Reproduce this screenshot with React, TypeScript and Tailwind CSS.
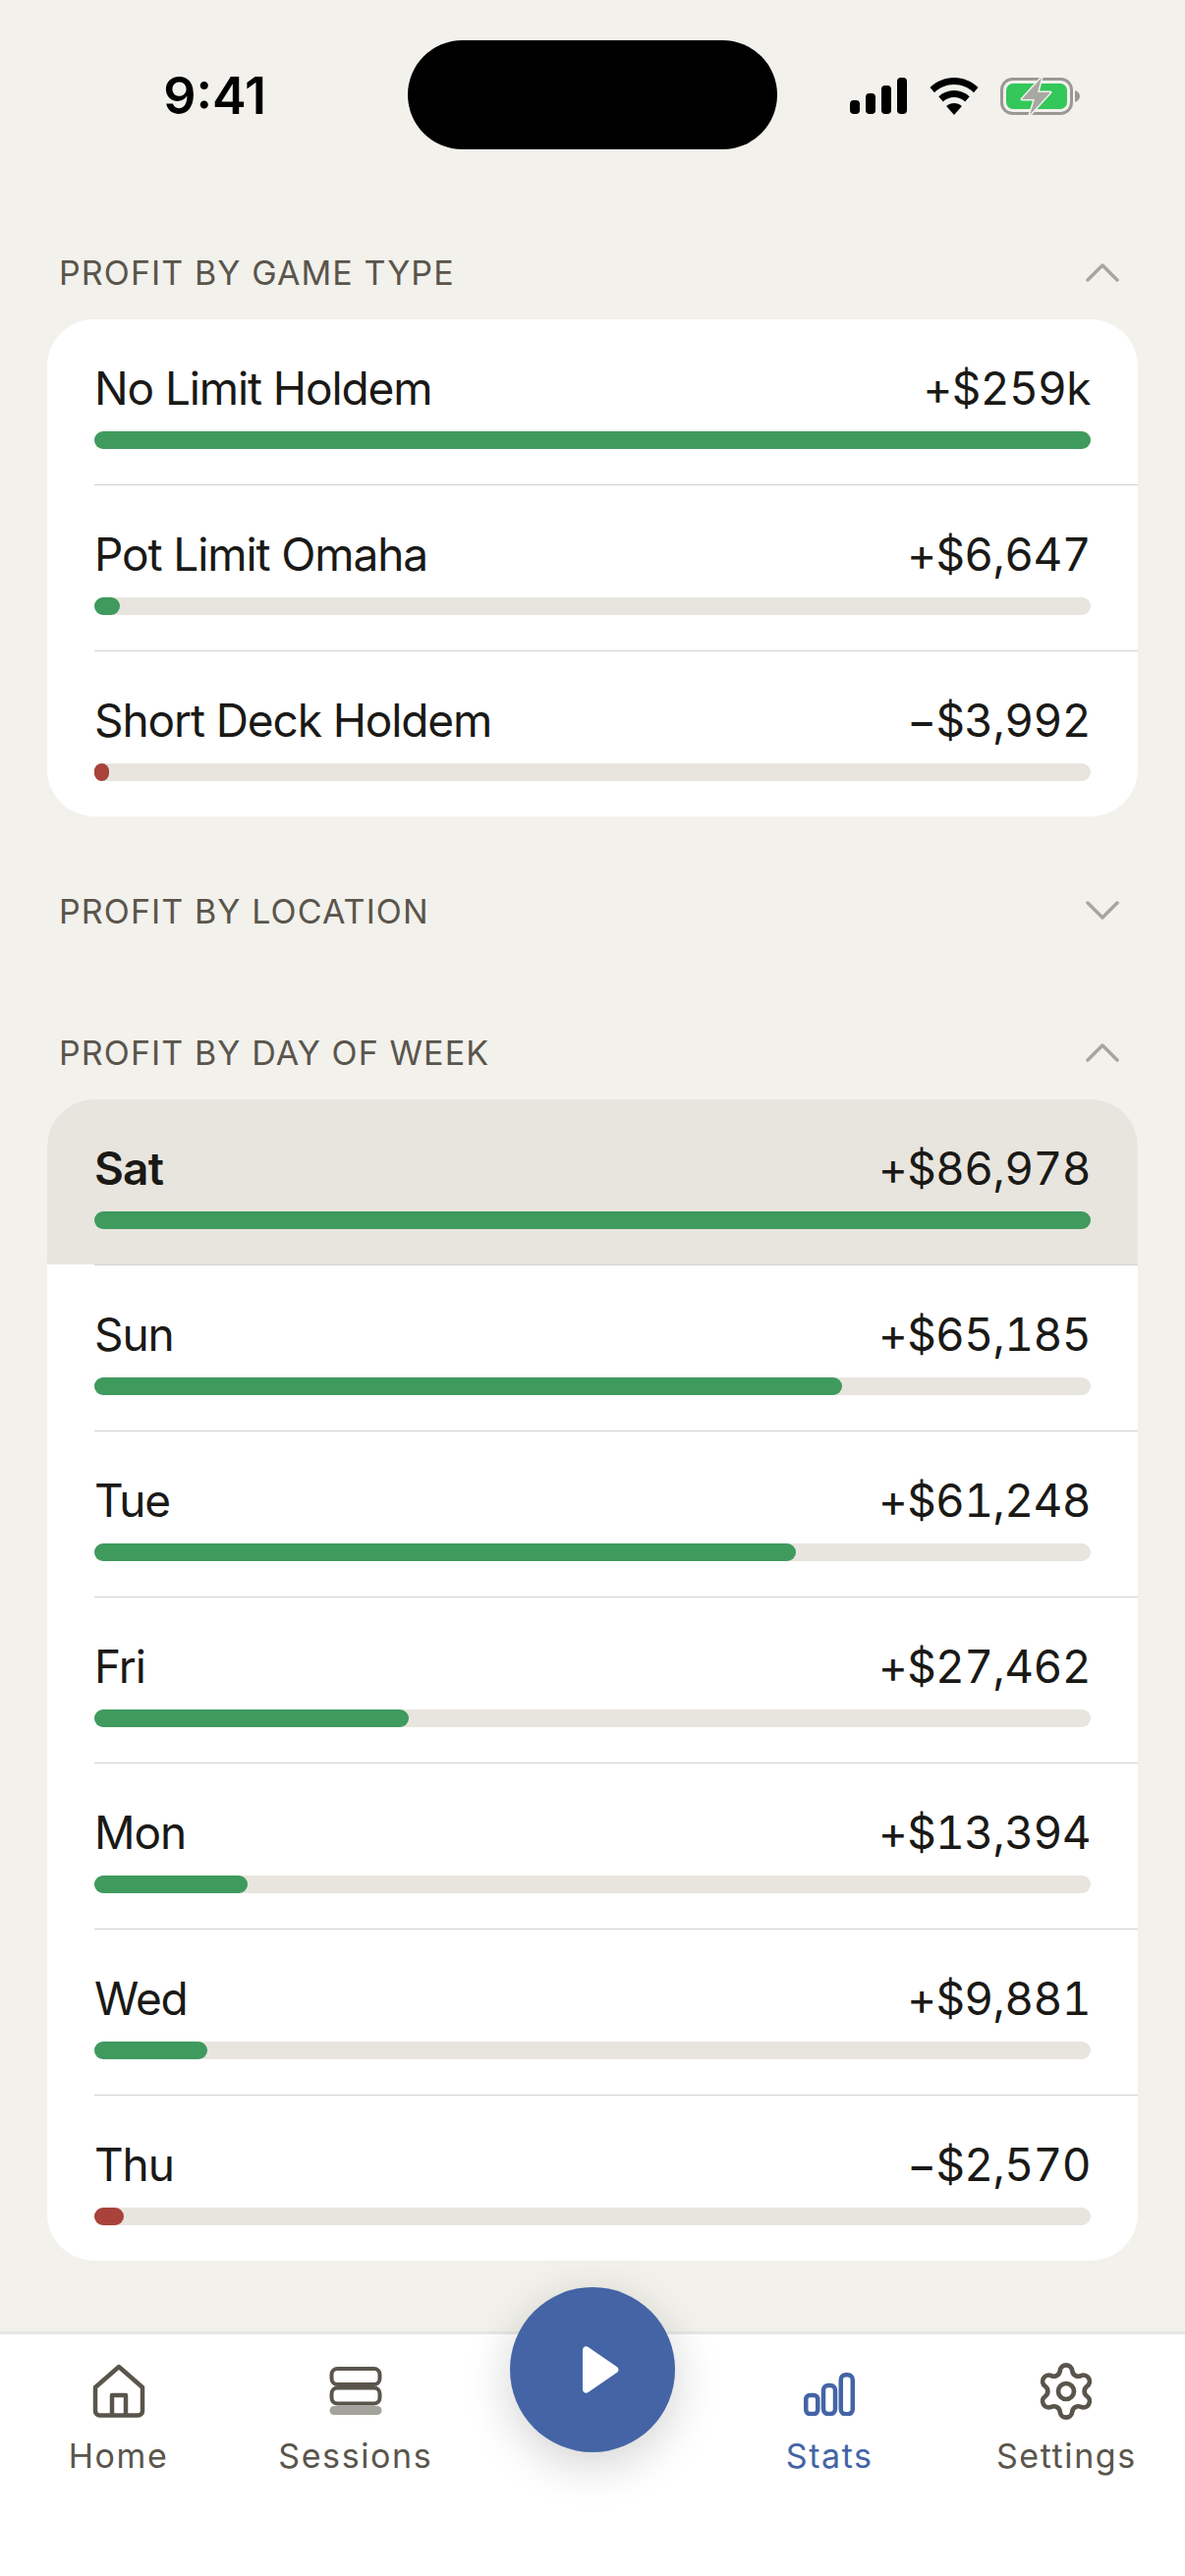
import { Settings } from 'lucide-react';

type Row = { label: string; value: string; pct: number; loss?: boolean; active?: boolean };

const gameRows: Row[] = [
  { label: 'No Limit Holdem', value: '+$259k', pct: 100 },
  { label: 'Pot Limit Omaha', value: '+$6,647', pct: 2.6 },
  { label: 'Short Deck Holdem', value: '−$3,992', pct: 1.5, loss: true }
];

const dayRows: Row[] = [
  { label: 'Sat', value: '+$86,978', pct: 100, active: true },
  { label: 'Sun', value: '+$65,185', pct: 75 },
  { label: 'Tue', value: '+$61,248', pct: 70.4 },
  { label: 'Fri', value: '+$27,462', pct: 31.6 },
  { label: 'Mon', value: '+$13,394', pct: 15.4 },
  { label: 'Wed', value: '+$9,881', pct: 11.3 },
  { label: 'Thu', value: '−$2,570', pct: 3, loss: true }
];

const Chevron = ({ up }: { up?: boolean }) => (
  <svg width="34" height="20" viewBox="0 0 34 20" fill="none" stroke="#a8a69c" strokeWidth="3.5" strokeLinecap="round" strokeLinejoin="round">
    <path d={up ? 'M2 18 17 3l15 15' : 'M2 2l15 15L32 2'} />
  </svg>
);

const SectionHeader = ({ title, up }: { title: string; up?: boolean }) => (
  <div className="flex h-24 items-center justify-between pl-[12px] pr-[19px]">
    <span className="text-[34px] tracking-[1.1px] text-[#5a554c]">{title}</span>
    <Chevron up={up} />
  </div>
);

const StatRow = ({ row }: { row: Row }) => (
  <div className={`h-[168px] px-12 pt-10 ${row.active ? 'bg-[#e8e5de]' : ''}`}>
    <div className="mb-[14px] flex h-[60px] items-center justify-between text-[46px] leading-[60px] text-[#1a1916]">
      <span className={row.active ? 'font-semibold tracking-[-0.8px]' : 'tracking-[-1.1px]'}>{row.label}</span>
      <span className="tabular-nums tracking-[-0.6px]">{row.value}</span>
    </div>
    <div className="h-[18px] rounded-full bg-[#e8e5de]">
      <div
        className={`h-full rounded-full ${row.loss ? 'bg-[#a8423a]' : 'bg-[#3f9a5e]'}`}
        style={{ width: `${row.pct}%` }}
      />
    </div>
  </div>
);

const StatCard = ({ rows }: { rows: Row[] }) => (
  <div className="overflow-hidden rounded-[48px] bg-white">
    {rows.map((row, i) => (
      <div key={row.label}>
        {i > 0 && <div className="ml-12 h-px bg-[#d2d2cf]" />}
        <StatRow row={row} />
      </div>
    ))}
  </div>
);

const StatusBar = () => (
  <div className="flex h-[229px] items-start">
    <div className="flex h-[196px] w-[415px] items-center justify-end pr-[144px] text-[52px] font-semibold text-black">9:41</div>
    <div className="mt-[41px] h-[111px] w-[376px] rounded-[56px] bg-black" />
    <div className="mt-[78px] flex items-center pl-[74px]">
      <svg width="58" height="38" viewBox="0 0 58 38" fill="black">
        <rect x="0" y="23" width="10" height="14" rx="4" />
        <rect x="16" y="16" width="10" height="21" rx="4" />
        <rect x="32" y="8" width="10" height="29" rx="4" />
        <rect x="48" y="0" width="10" height="37" rx="4" />
      </svg>
      <svg className="ml-[23px]" width="50" height="38" viewBox="0 0 50 38" fill="black">
        <path d="M25 0C15.6 0 7.2 3.7 0.5 10L5 15.2C10.5 10 17.4 7 25 7s14.5 3 20 8.2l4.5-5.2C42.8 3.7 34.4 0 25 0z" />
        <path d="M25 13c-6 0-11.4 2.3-15.7 6.2l4.5 5.2C16.8 21.7 20.7 20 25 20s8.2 1.7 11.2 4.4l4.5-5.2C36.4 15.3 31 13 25 13z" />
        <path d="M25 26c-3 0-5.7 1-7.9 2.9L25 38l7.9-9.1C30.7 27 28 26 25 26z" />
      </svg>
      <svg className="ml-[22px]" width="82" height="40" viewBox="0 0 82 40" fill="none">
        <rect x="1.5" y="2.5" width="71" height="35" rx="11" stroke="#999893" strokeWidth="3" />
        <rect x="6" y="7" width="62" height="26" rx="7" fill="#34c759" />
        <path d="M76 14c3 1 5 3 5 6s-2 5-5 6z" fill="#999893" />
        <path d="M42 1 22 23h13l-5 16 21-23H38z" fill="#a8a8a2" stroke="#f2f1ec" strokeWidth="3" strokeLinejoin="round" paintOrder="stroke" />
      </svg>
    </div>
  </div>
);

const HomeIcon = () => (
  <svg width="54" height="56" viewBox="0 0 54 56" fill="none" stroke="#5a554c" strokeWidth="4.5" strokeLinejoin="round">
    <path d="M27 3 51 24V48a4.5 4.5 0 0 1-4.5 4.5H7.5A4.5 4.5 0 0 1 3 48V24z" />
    <path d="M20 52.5V32h14v20.5" />
  </svg>
);

const SessionsIcon = () => (
  <svg width="54" height="50" viewBox="0 0 54 50" fill="none">
    <rect x="2.5" y="2" width="49" height="16" rx="6" stroke="#5a554c" strokeWidth="4" />
    <rect x="2.5" y="21.5" width="49" height="16" rx="6" stroke="#5a554c" strokeWidth="4" />
    <rect x="0.5" y="40" width="53" height="9" rx="4.5" fill="#a3a29b" />
  </svg>
);

const StatsIcon = () => (
  <svg className="mt-[5px]" width="52" height="44" viewBox="0 0 52 44" fill="none" stroke="#4464a5" strokeWidth="4.5" strokeLinejoin="round">
    <rect x="2.25" y="23" width="12" height="19" rx="4" />
    <rect x="20" y="13" width="12" height="29" rx="5" />
    <rect x="37.75" y="2.25" width="12" height="40" rx="5" />
  </svg>
);

const tabs = [
  { label: 'Home', icon: <HomeIcon /> },
  { label: 'Sessions', icon: <SessionsIcon /> },
  { label: 'Stats', icon: <StatsIcon />, active: true },
  { label: 'Settings', icon: <Settings size={64} color="#5a554c" strokeWidth={1.75} /> }
];

const TabItem = ({ label, icon, active }: { label: string; icon: React.ReactNode; active?: boolean }) => (
  <div className="flex flex-col items-center pt-[27px]">
    <div className="flex h-[62px] items-center justify-center">{icon}</div>
    <span className={`mt-[13px] text-[34px] leading-[44px] tracking-[1.6px] ${active ? 'text-[#4464a5]' : 'text-[#5a554c]'}`}>{label}</span>
  </div>
);

const TabBar = () => (
  <div className="relative grid h-[249px] grid-cols-5 border-t-[3px] border-[#e6e6e3] bg-white">
    <TabItem {...tabs[0]} />
    <TabItem {...tabs[1]} />
    <div className="relative">
      <div className="absolute -top-[48px] left-1/2 flex h-[168px] w-[168px] -translate-x-1/2 items-center justify-center rounded-full bg-[#4464a5] shadow-[0_12px_48px_rgba(0,0,0,0.18)]">
        <svg className="ml-[17px]" width="38" height="52" viewBox="0 0 40 52" fill="white">
          <path d="M1 5C1 1.5 4.5 0 7 1.8L38 23c2 1.4 2 4.6 0 6L7 50.2C4.5 52 1 50.5 1 47z" />
        </svg>
      </div>
    </div>
    <TabItem {...tabs[2]} />
    <TabItem {...tabs[3]} />
  </div>
);

export default function App() {
  return (
    <div className="flex h-[2622px] w-[1206px] flex-col overflow-hidden bg-[#f2f1ec] font-[Inter,sans-serif]">
      <StatusBar />
      <main className="flex-1 space-y-12 px-12">
        <section>
          <SectionHeader title="PROFIT BY GAME TYPE" up />
          <StatCard rows={gameRows} />
        </section>
        <section>
          <SectionHeader title="PROFIT BY LOCATION" />
        </section>
        <section>
          <SectionHeader title="PROFIT BY DAY OF WEEK" up />
          <StatCard rows={dayRows} />
        </section>
      </main>
      <TabBar />
    </div>
  );
}
